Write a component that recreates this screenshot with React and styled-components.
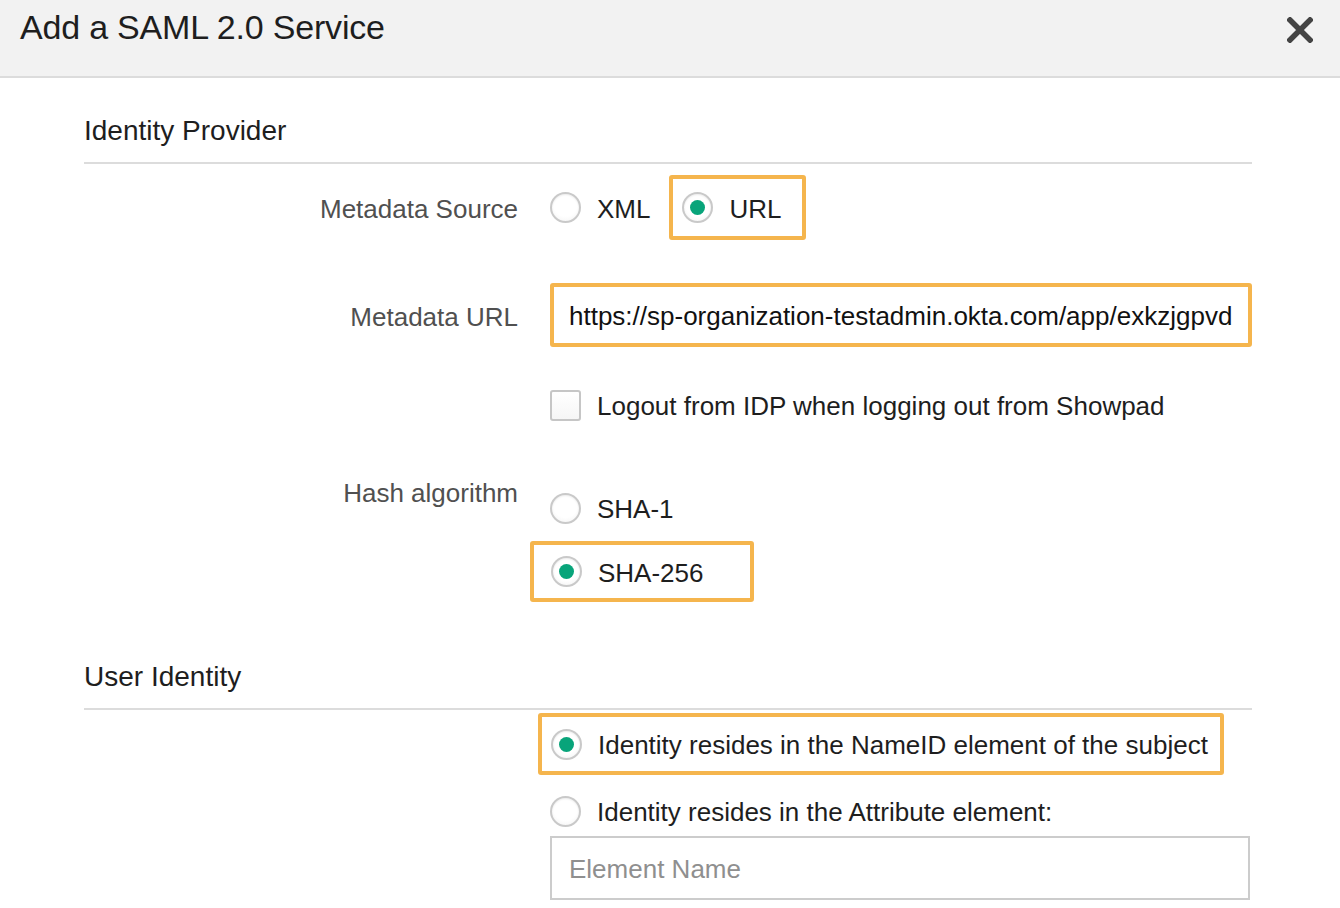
import React from "react";
import styled, { createGlobalStyle } from "styled-components";

const Global = createGlobalStyle`
  html, body { margin: 0; padding: 0; background: #fff; }
  body { font-family: "Liberation Sans", Arial, sans-serif; color: #333; }
  * { box-sizing: border-box; }
`;

const Modal = styled.div`
  width: 1340px;
  min-height: 908px;
  background: #fff;
`;

const Header = styled.header`
  height: 78px;
  background: #f2f2f2;
  border-bottom: 2px solid #dcdcdc;
  display: flex;
  justify-content: space-between;
  align-items: flex-start;
  padding: 0 27px 0 20px;
`;

const Title = styled.h1`
  margin: 0;
  font-size: 34px;
  font-weight: 400;
  line-height: 54px;
  color: #1e1e1e;
  letter-spacing: -0.2px;
`;

const Close = styled.button`
  border: 0;
  background: transparent;
  padding: 0;
  margin-top: 17px;
  width: 26px;
  height: 26px;
  cursor: pointer;
  display: block;
`;

const Body = styled.div`
  padding: 0 88px 0 84px;
`;

const SectionTitle = styled.h2`
  margin: ${(p) => p.$top}px 0 0;
  font-size: 28px;
  font-weight: 400;
  line-height: 40px;
  color: #1e1e1e;
  padding-bottom: 11px;
  border-bottom: 2px solid #dcdcdc;
`;

const Row = styled.div`
  display: grid;
  grid-template-columns: 434px 1fr;
  column-gap: 32px;
  align-items: ${(p) => (p.$top ? "start" : "center")};
  margin-top: ${(p) => p.$mt}px;
  min-height: ${(p) => p.$h || 0}px;
`;

const Label = styled.div`
  text-align: right;
  font-size: 26px;
  line-height: ${(p) => p.$lh || 36}px;
  padding-top: 3px;
  color: #505050;
`;

const Controls = styled.div`
  display: flex;
  flex-direction: ${(p) => (p.$col ? "column" : "row")};
  align-items: ${(p) => (p.$col ? "flex-start" : "center")};
  padding-top: ${(p) => p.$pt || 0}px;
`;

const Option = styled.label`
  display: inline-flex;
  align-items: center;
  gap: 16px;
  height: 36px;
  font-size: 26px;
  color: #1e1e1e;
  margin-top: ${(p) => p.$mt || 0}px;
  margin-right: ${(p) => p.$mr || 0}px;
  white-space: nowrap;
`;

const OptionText = styled.span`
  padding-top: 3px;
`;

const Highlight = styled.div`
  display: inline-flex;
  align-items: center;
  border: 4px solid #f5b54d;
  border-radius: 3px;
  height: ${(p) => p.$h}px;
  width: ${(p) => (p.$w ? `${p.$w}px` : "auto")};
  padding: 0 ${(p) => p.$pr || 0}px 0 ${(p) => p.$pl || 0}px;
  margin-left: ${(p) => p.$ml || 0}px;
  margin-top: ${(p) => p.$mt || 0}px;
`;

const Radio = styled.span`
  width: 31px;
  height: 31px;
  border-radius: 50%;
  border: 2px solid #c9c9c9;
  background: radial-gradient(circle at 50% 40%, #ffffff 55%, #f0f0f0 100%);
  box-shadow: inset 0 1px 2px rgba(0, 0, 0, 0.08);
  display: inline-flex;
  align-items: center;
  justify-content: center;
  flex: none;
  &::after {
    content: "";
    width: 15px;
    height: 15px;
    border-radius: 50%;
    background: #08a47a;
    display: ${(p) => (p.$checked ? "block" : "none")};
  }
`;

const Checkbox = styled.span`
  width: 31px;
  height: 31px;
  border: 2px solid #c6c6c6;
  border-radius: 3px;
  background: linear-gradient(#ffffff, #f6f6f6);
  flex: none;
`;

const UrlBox = styled.div`
  border: 4px solid #f5b54d;
  border-radius: 3px;
  height: 64px;
  width: 702px;
  display: flex;
  align-items: center;
  overflow: hidden;
`;

const UrlInput = styled.input`
  border: 0;
  outline: none;
  width: 100%;
  height: 100%;
  padding: 3px 16px 0 15px;
  font-family: "Liberation Sans", Arial, sans-serif;
  font-size: 26px;
  color: #111;
  background: #fff;
`;

const TextInput = styled.input`
  display: block;
  width: 700px;
  height: 64px;
  border: 2px solid #cccccc;
  border-radius: 0;
  padding: 3px 0 0 17px;
  margin-top: ${(p) => p.$mt || 0}px;
  font-family: "Liberation Sans", Arial, sans-serif;
  font-size: 26px;
  color: #222;
  outline: none;
  &::placeholder {
    color: #8f8f8f;
  }
`;

const Stack = styled.div`
  margin-left: 466px;
  display: flex;
  flex-direction: column;
  align-items: flex-start;
`;

function CloseIcon() {
  return (
    <svg width="26" height="26" viewBox="0 0 26 26">
      <path d="M3 3 L23 23 M23 3 L3 23" stroke="#444" strokeWidth="5.5" strokeLinecap="square" />
    </svg>
  );
}

export default function App() {
  return (
    <>
      <Global />
      <Modal>
        <Header>
          <Title>Add a SAML 2.0 Service</Title>
          <Close aria-label="Close">
            <CloseIcon />
          </Close>
        </Header>
        <Body>
          <SectionTitle $top={33}>Identity Provider</SectionTitle>

          <Row $mt={11} $h={65}>
            <Label>Metadata Source</Label>
            <Controls>
              <Option $mr={19}>
                <Radio />
                <OptionText>XML</OptionText>
              </Option>
              <Highlight $h={65} $pl={9} $pr={21}>
                <Option>
                  <Radio $checked />
                  <OptionText>URL</OptionText>
                </Option>
              </Highlight>
            </Controls>
          </Row>

          <Row $mt={43} $h={64}>
            <Label>Metadata URL</Label>
            <Controls>
              <UrlBox>
                <UrlInput readOnly value="https://sp-organization-testadmin.okta.com/app/exkzjgpvd3kTzXq0h7" />
              </UrlBox>
            </Controls>
          </Row>

          <Row $mt={40} $h={35}>
            <div />
            <Controls>
              <Option>
                <Checkbox />
                <OptionText>Logout from IDP when logging out from Showpad</OptionText>
              </Option>
            </Controls>
          </Row>

          <Row $mt={47} $top>
            <Label $lh={40}>Hash algorithm</Label>
            <Controls $col $pt={20}>
              <Option>
                <Radio />
                <OptionText>SHA-1</OptionText>
              </Option>
              <Highlight $h={61} $w={224} $pl={17} $ml={-20} $mt={15}>
                <Option>
                  <Radio $checked />
                  <OptionText>SHA-256</OptionText>
                </Option>
              </Highlight>
            </Controls>
          </Row>

          <SectionTitle $top={55}>User Identity</SectionTitle>

          <Stack>
            <Highlight $h={62} $pl={9} $pr={12} $ml={-12} $mt={3}>
              <Option>
                <Radio $checked />
                <OptionText>Identity resides in the NameID element of the subject</OptionText>
              </Option>
            </Highlight>
            <Option $mt={18}>
              <Radio />
              <OptionText>Identity resides in the Attribute element:</OptionText>
            </Option>
            <TextInput $mt={7} placeholder="Element Name" />
          </Stack>
        </Body>
      </Modal>
    </>
  );
}
